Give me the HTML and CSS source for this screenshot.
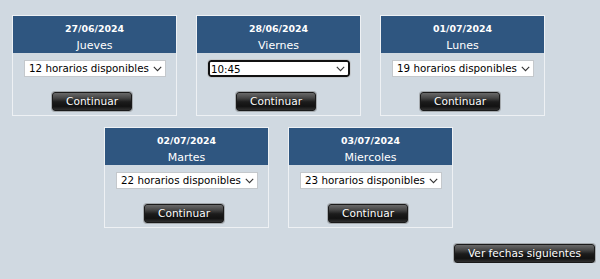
FILE: index.html
```html
<!DOCTYPE html>
<html lang="es">
<head>
<meta charset="utf-8">
<title>Fechas disponibles</title>
<link rel="stylesheet" href="styles.css">
</head>
<body>
<div class="page">
  <div class="cards">
    <div class="card">
      <div class="card-head">
        <div class="date">27/06/2024</div>
        <div class="day">Jueves</div>
      </div>
      <div class="card-body">
        <div class="sel-wrap">
          <select class="sel"><option>12 horarios disponibles</option></select>
          <svg class="chev" width="9" height="6" viewBox="0 0 9 6"><path d="M0.8 0.8 L4.5 4.6 L8.2 0.8" fill="none" stroke="#333" stroke-width="1.1"/></svg>
        </div>
        <button class="btn btn-small">Continuar</button>
      </div>
    </div>
    <div class="card">
      <div class="card-head">
        <div class="date">28/06/2024</div>
        <div class="day">Viernes</div>
      </div>
      <div class="card-body">
        <div class="sel-wrap">
          <select class="sel sel-focus"><option>10:45</option></select>
          <svg class="chev chev-focus" width="9" height="6" viewBox="0 0 9 6"><path d="M0.8 0.8 L4.5 4.6 L8.2 0.8" fill="none" stroke="#333" stroke-width="1.1"/></svg>
        </div>
        <button class="btn btn-small">Continuar</button>
      </div>
    </div>
    <div class="card">
      <div class="card-head">
        <div class="date">01/07/2024</div>
        <div class="day">Lunes</div>
      </div>
      <div class="card-body">
        <div class="sel-wrap">
          <select class="sel"><option>19 horarios disponibles</option></select>
          <svg class="chev" width="9" height="6" viewBox="0 0 9 6"><path d="M0.8 0.8 L4.5 4.6 L8.2 0.8" fill="none" stroke="#333" stroke-width="1.1"/></svg>
        </div>
        <button class="btn btn-small">Continuar</button>
      </div>
    </div>
    <div class="card">
      <div class="card-head">
        <div class="date">02/07/2024</div>
        <div class="day">Martes</div>
      </div>
      <div class="card-body">
        <div class="sel-wrap">
          <select class="sel"><option>22 horarios disponibles</option></select>
          <svg class="chev" width="9" height="6" viewBox="0 0 9 6"><path d="M0.8 0.8 L4.5 4.6 L8.2 0.8" fill="none" stroke="#333" stroke-width="1.1"/></svg>
        </div>
        <button class="btn btn-small">Continuar</button>
      </div>
    </div>
    <div class="card">
      <div class="card-head">
        <div class="date">03/07/2024</div>
        <div class="day">Miercoles</div>
      </div>
      <div class="card-body">
        <div class="sel-wrap">
          <select class="sel"><option>23 horarios disponibles</option></select>
          <svg class="chev" width="9" height="6" viewBox="0 0 9 6"><path d="M0.8 0.8 L4.5 4.6 L8.2 0.8" fill="none" stroke="#333" stroke-width="1.1"/></svg>
        </div>
        <button class="btn btn-small">Continuar</button>
      </div>
    </div>
  </div>
  <div class="footer">
    <button class="btn btn-next">Ver fechas siguientes</button>
  </div>
</div>
</body>
</html>
```

FILE: styles.css
```css
html, body {
  margin: 0;
  padding: 0;
  background: #d0d9e1;
  font-family: "DejaVu Sans", Verdana, sans-serif;
}

.page {
  width: 600px;
  padding-top: 15px;
}

.cards {
  width: 557px;
  display: flex;
  flex-wrap: wrap;
  justify-content: center;
  column-gap: 19px;
  row-gap: 11px;
}

.card {
  width: 165px;
  box-sizing: border-box;
  border: 1px solid #eef1f4;
  display: flex;
  flex-direction: column;
}

.card-head {
  background: #2f5680;
  color: #ffffff;
  text-align: center;
  padding-top: 5px;
  height: 37px;
  box-sizing: border-box;
}

.date {
  font-size: 9.4px;
  font-weight: bold;
  line-height: 16px;
}

.day {
  font-size: 11px;
  line-height: 15px;
  padding-top: 1px;
}

.card-body {
  display: flex;
  flex-direction: column;
  align-items: center;
  padding-top: 7px;
  padding-bottom: 4px;
}

.sel-wrap {
  position: relative;
  width: 142px;
  height: 17px;
  margin-left: 1px;
}

.sel {
  -webkit-appearance: none;
  appearance: none;
  display: block;
  width: 142px;
  height: 17px;
  box-sizing: border-box;
  border: 1px solid #c4c8cc;
  background: #ffffff;
  color: #000000;
  font-family: "DejaVu Sans", Verdana, sans-serif;
  font-size: 10.3px;
  line-height: 15px;
  padding: 0 0 0 4px;
  border-radius: 0;
  margin: 0;
}

.sel-focus {
  border: 2px solid #111111;
  border-radius: 3px;
  outline: 1px solid #c4c8cc;
  padding-left: 1px;
}

.chev {
  position: absolute;
  right: 4px;
  top: 6px;
  pointer-events: none;
}

.chev-focus {
  right: 5px;
}

.btn {
  height: 19px;
  box-sizing: border-box;
  border: 1px solid #1a1a1a;
  border-radius: 3px;
  background: linear-gradient(#6a6a6a 0%, #444444 30%, #1c1c1c 52%, #121212 78%, #303030 100%);
  box-shadow: 0 0 0 1px rgba(110, 110, 110, 0.45);
  color: #ffffff;
  font-family: "DejaVu Sans", Verdana, sans-serif;
  font-size: 10.6px;
  line-height: 17px;
  padding: 0;
  margin: 0;
  text-shadow: 0 0 1px rgba(0, 0, 0, 0.6);
}

.btn-small {
  width: 80px;
  margin-top: 15px;
  margin-right: 5px;
}

.footer {
  display: flex;
  justify-content: flex-end;
  padding-right: 5px;
  padding-top: 16px;
}

.btn-next {
  width: 141px;
}
```
